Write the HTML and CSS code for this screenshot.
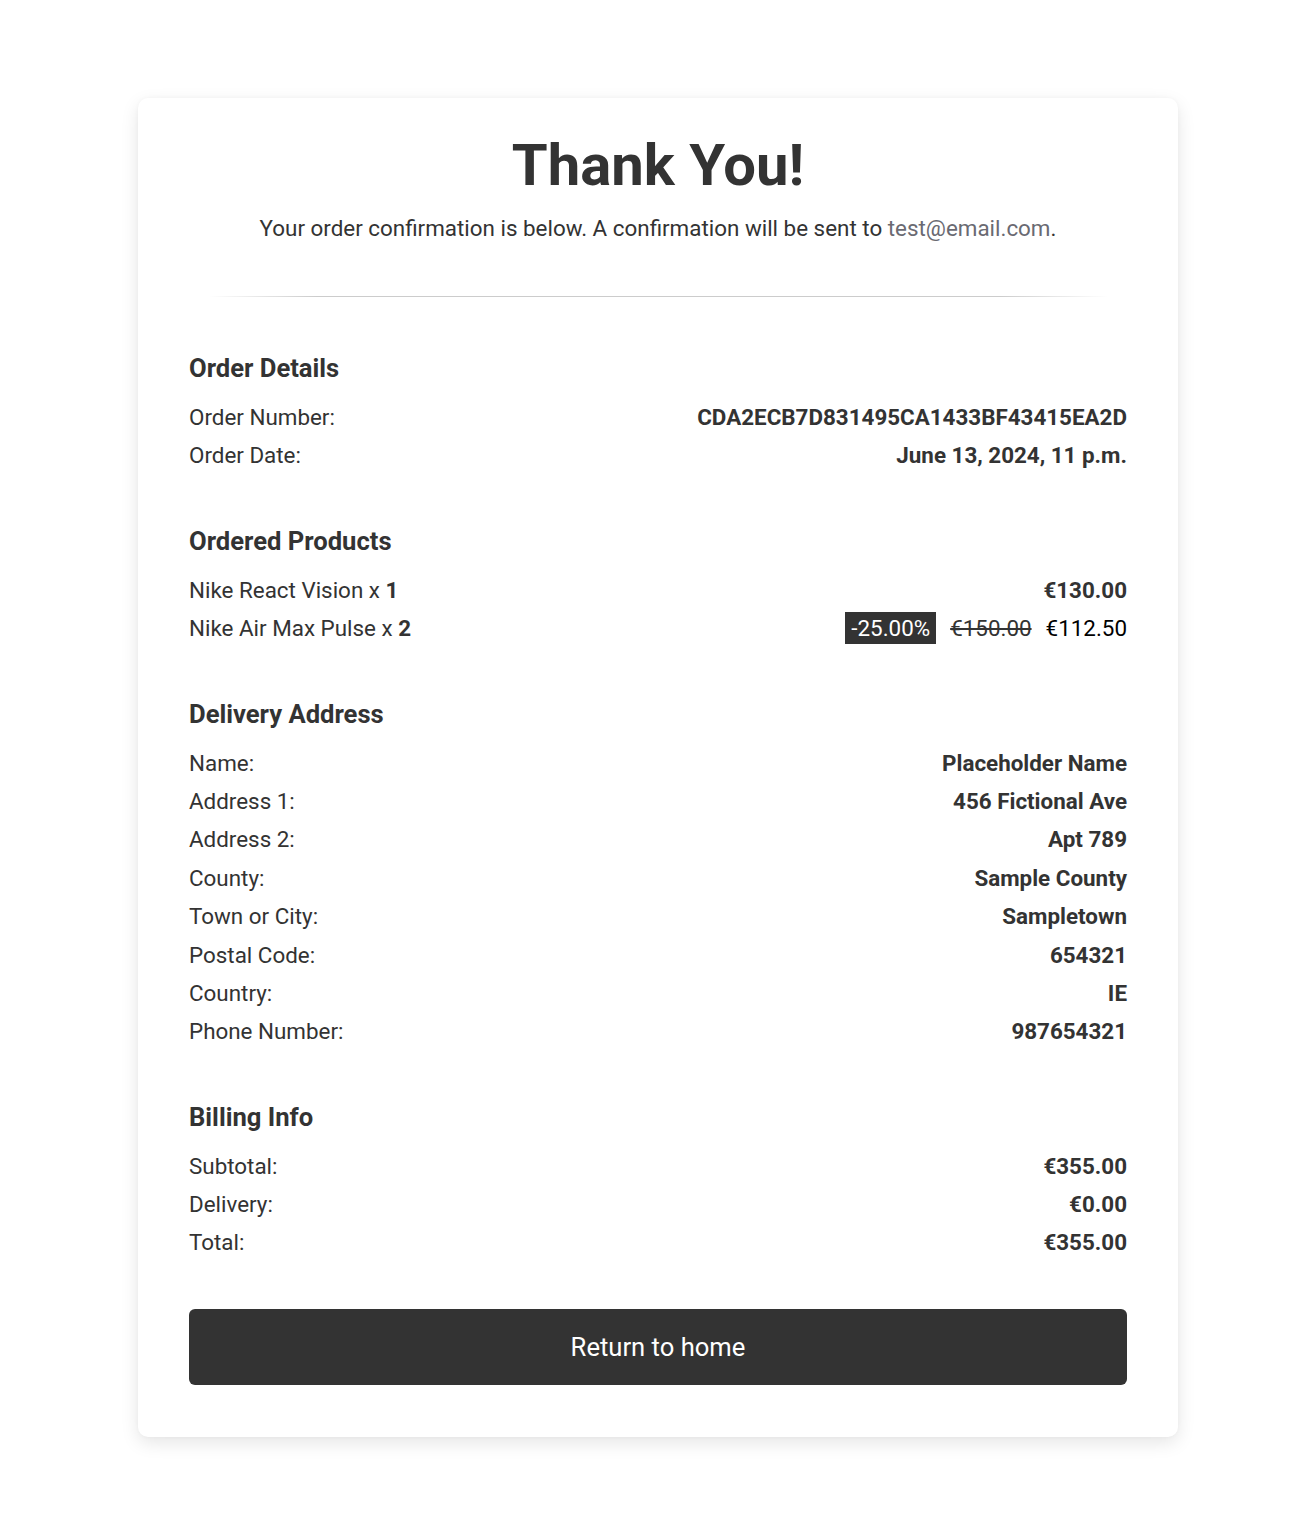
FILE: index.html
```html
<!DOCTYPE html>
<html lang="en">
<head>
<meta charset="utf-8">
<title>Thank You</title>
<link rel="stylesheet" href="styles.css">
</head>
<body>
<main class="card">
  <h1 class="title">Thank You!</h1>
  <p class="subtitle">Your order confirmation is below. A confirmation will be sent to <a class="email" href="#">test@email.com</a>.</p>
  <hr class="divider">

  <section class="section">
    <h2 class="section-title">Order Details</h2>
    <div class="row"><span class="label">Order Number:</span><span class="value">CDA2ECB7D831495CA1433BF43415EA2D</span></div>
    <div class="row"><span class="label">Order Date:</span><span class="value">June 13, 2024, 11 p.m.</span></div>
  </section>

  <section class="section">
    <h2 class="section-title">Ordered Products</h2>
    <div class="row"><span class="label">Nike React Vision x <b>1</b></span><span class="value">€130.00</span></div>
    <div class="row"><span class="label">Nike Air Max Pulse x <b>2</b></span><span class="prices"><span class="badge">-25.00%</span><s class="old">€150.00</s><span class="new">€112.50</span></span></div>
  </section>

  <section class="section">
    <h2 class="section-title">Delivery Address</h2>
    <div class="row"><span class="label">Name:</span><span class="value">Placeholder Name</span></div>
    <div class="row"><span class="label">Address 1:</span><span class="value">456 Fictional Ave</span></div>
    <div class="row"><span class="label">Address 2:</span><span class="value">Apt 789</span></div>
    <div class="row"><span class="label">County:</span><span class="value">Sample County</span></div>
    <div class="row"><span class="label">Town or City:</span><span class="value">Sampletown</span></div>
    <div class="row"><span class="label">Postal Code:</span><span class="value">654321</span></div>
    <div class="row"><span class="label">Country:</span><span class="value">IE</span></div>
    <div class="row"><span class="label">Phone Number:</span><span class="value">987654321</span></div>
  </section>

  <section class="section">
    <h2 class="section-title">Billing Info</h2>
    <div class="row"><span class="label">Subtotal:</span><span class="value">€355.00</span></div>
    <div class="row"><span class="label">Delivery:</span><span class="value">€0.00</span></div>
    <div class="row"><span class="label">Total:</span><span class="value">€355.00</span></div>
  </section>

  <a class="button" href="#">Return to home</a>
</main>
</body>
</html>
```

FILE: styles.css
```css
* { box-sizing: border-box; }
html, body { background: #fff; }
body {
  margin: 0;
  padding: 98px 0 60px 16px;
  font-family: Roboto, "Liberation Sans", Arial, sans-serif;
  color: #333;
}
.card {
  width: 1040px;
  margin: 0 auto;
  background: #fff;
  border-radius: 10px;
  box-shadow: 0 6px 18px rgba(0, 0, 0, 0.1), 0 0 4px rgba(0, 0, 0, 0.03);
  padding: 32px 51px 52px;
}
.title {
  margin: 0;
  text-align: center;
  font-size: 58px;
  line-height: 70px;
  font-weight: 700;
}
.subtitle {
  margin: 13px 0 0;
  text-align: center;
  font-size: 22.4px;
  line-height: 30px;
}
.email { color: #6a6a72; text-decoration: none; }
.divider {
  width: 900px;
  height: 1px;
  margin: 53px auto 0;
  border: 0;
  background: linear-gradient(90deg, rgba(0,0,0,0), rgba(0,0,0,0.2) 12%, rgba(0,0,0,0.2) 88%, rgba(0,0,0,0));
}
.section { margin-top: 51px; }
.divider + .section { margin-top: 56px; }
.section-title {
  margin: 0 0 15px;
  font-size: 25.6px;
  line-height: 30px;
  font-weight: 700;
}
.row {
  display: flex;
  justify-content: space-between;
  align-items: center;
  font-size: 22.4px;
  line-height: 38.4px;
  height: 38.4px;
}
.value { font-weight: 700; }
.prices { display: flex; align-items: center; gap: 14px; }
.badge {
  background: #333;
  color: #fff;
  padding: 0 6px;
  line-height: 32px;
}
.old { color: #333; }
.new { color: #000; }
.button {
  display: flex;
  align-items: center;
  justify-content: center;
  margin-top: 47px;
  height: 76px;
  background: #333;
  color: #fff;
  border-radius: 6px;
  font-size: 25.6px;
  text-decoration: none;
}
```
